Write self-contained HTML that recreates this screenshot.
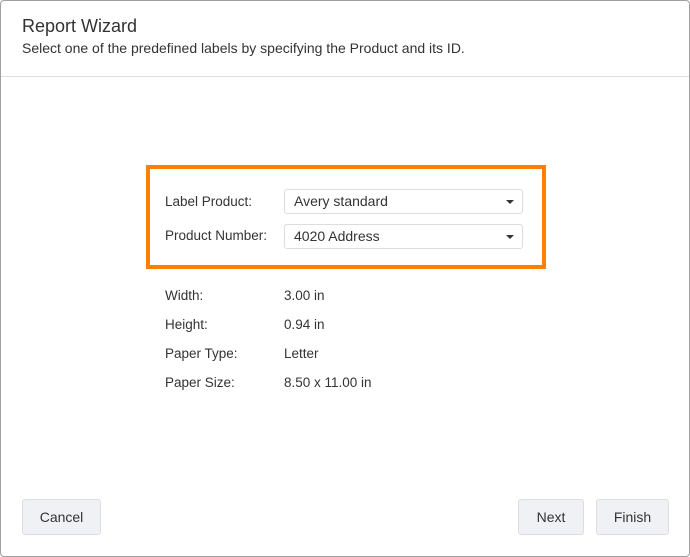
<!DOCTYPE html><html><head><style>
body{margin:0;width:690px;height:557px;font-family:"Liberation Sans",sans-serif;color:#333;background:#fff;overflow:hidden}
.w{position:absolute;left:0;top:0;width:688px;height:555px;border:1px solid #a0a0a0;border-radius:4px}
.a{position:absolute;white-space:nowrap}
.t{left:22px;top:16px;font-size:18px;color:#333}
.s{left:22px;top:40px;font-size:14px}
.hl{position:absolute;left:1px;right:1px;top:76px;border-top:1px solid #ddd}
.o{position:absolute;left:146px;top:165px;width:392px;height:96px;border:4px solid #ff8000}
.l{font-size:13.5px;color:#333}
.d{position:absolute;left:284px;width:237px;height:23px;border:1px solid #ddd;border-radius:3px;font-size:14px;line-height:23px;text-indent:9px}
.d:after{content:"";position:absolute;right:8px;top:10px;border:4px solid transparent;border-top:4px solid #333;border-bottom:0}
.b{position:absolute;top:499px;height:34px;border:1px solid #ddd;border-radius:3px;background:#eff1f5;font-size:14px;line-height:34px;text-align:center}
</style></head><body><div class="w"></div>
<div class="a t">Report Wizard</div>
<div class="a s">Select one of the predefined labels by specifying the Product and its ID.</div>
<div class="hl"></div>
<div class="o"></div>
<div class="a l" style="left:165px;top:194px">Label Product:</div>
<div class="d" style="top:189px">Avery standard</div>
<div class="a l" style="left:165px;top:228px">Product Number:</div>
<div class="d" style="top:224px">4020 Address</div>
<div class="a l" style="left:165px;top:288px">Width:</div><div class="a l" style="left:284px;top:288px">3.00 in</div>
<div class="a l" style="left:165px;top:317px">Height:</div><div class="a l" style="left:284px;top:317px">0.94 in</div>
<div class="a l" style="left:165px;top:346px">Paper Type:</div><div class="a l" style="left:284px;top:346px">Letter</div>
<div class="a l" style="left:165px;top:375px">Paper Size:</div><div class="a l" style="left:284px;top:375px">8.50 x 11.00 in</div>
<div class="b" style="left:22px;width:77px">Cancel</div>
<div class="b" style="left:518px;width:64px">Next</div>
<div class="b" style="left:596px;width:71px">Finish</div>
</body></html>
